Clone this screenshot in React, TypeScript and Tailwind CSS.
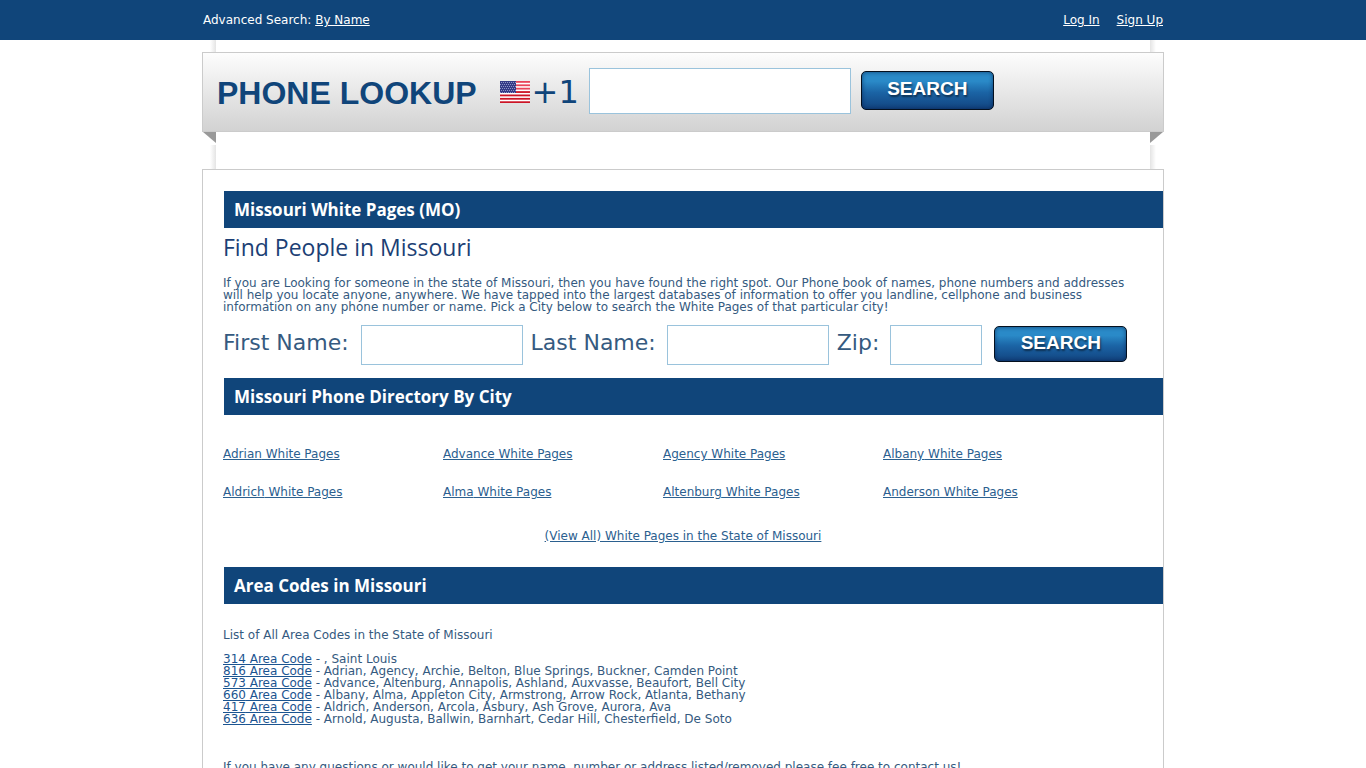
import React from 'react';

const cities = ['Adrian', 'Advance', 'Agency', 'Albany', 'Aldrich', 'Alma', 'Altenburg', 'Anderson'];

const areaCodes = [
  { code: '314', places: ', Saint Louis' },
  { code: '816', places: 'Adrian, Agency, Archie, Belton, Blue Springs, Buckner, Camden Point' },
  { code: '573', places: 'Advance, Altenburg, Annapolis, Ashland, Auxvasse, Beaufort, Bell City' },
  { code: '660', places: 'Albany, Alma, Appleton City, Armstrong, Arrow Rock, Atlanta, Bethany' },
  { code: '417', places: 'Aldrich, Anderson, Arcola, Asbury, Ash Grove, Aurora, Ava' },
  { code: '636', places: 'Arnold, Augusta, Ballwin, Barnhart, Cedar Hill, Chesterfield, De Soto' },
];

const stripes = [0, 1, 2, 3, 4, 5, 6];

const Flag = () => (
  <svg width="30" height="22" viewBox="0 0 30 22" aria-hidden="true">
    <rect width="30" height="22" fill="#fff" />
    {stripes.map((n) => (
      <rect key={n} y={n * 3.38} width="30" height="1.8" fill={n < 3 ? '#e8455a' : '#cc1426'} />
    ))}
    <rect width="16" height="12" fill="#343a86" />
    {[1, 3, 5, 7, 9, 11].map((y) =>
      [1, 3, 5, 7, 9, 11, 13, 15].map((x) => (
        <rect key={`${x}-${y}`} x={x - (y % 4 === 1 ? 0 : 1)} y={y} width="1" height="1" fill="#8d92c6" />
      ))
    )}
  </svg>
);

const SearchButton = ({ className }: { className: string }) => (
  <button
    type="submit"
    className={`mb-0.5 w-[133px] shrink-0 rounded-[5px] border border-[#04101f] bg-linear-to-b from-[#2a8ac8] from-25% via-[#1b64a5] via-55% to-[#124480] pb-0.5 font-['Liberation_Sans',Arial,sans-serif] text-[19px] font-bold text-white shadow-[inset_0_0_4px_rgba(0,20,60,0.6)] [text-shadow:1px_2px_2px_rgba(0,0,0,0.5)] ${className}`}
  >
    SEARCH
  </button>
);

// soft vertical edges that run behind the ribbon
const Edges = ({ className }: { className: string }) => (
  <div className={`flex justify-between px-2 ${className}`}>
    <div className="w-1.5 bg-linear-to-l from-[#e4e4e4] to-white" />
    <div className="w-1.5 bg-linear-to-r from-[#e4e4e4] to-white" />
  </div>
);

const Folds = () => (
  <div className="flex justify-between">
    <svg width="14" height="13" viewBox="0 0 14 13" aria-hidden="true">
      <path d="M1 0H14V11Z" fill="#999" />
    </svg>
    <svg width="14" height="13" viewBox="0 0 14 13" aria-hidden="true">
      <path d="M13 0H0V11Z" fill="#999" />
    </svg>
  </div>
);

const Bar = ({ children }: { children: React.ReactNode }) => (
  <h2 className="ml-[21px] flex h-[37px] items-center bg-[#10457a] px-2.5 font-['Open_Sans',sans-serif] text-[17px] font-bold text-white">
    {children}
  </h2>
);

const inputStyle = 'min-w-0 border border-[#9ac3dc] bg-white px-2 text-xl outline-none';

export default function App() {
  return (
    <div className="min-h-screen bg-white font-['DejaVu_Sans',Verdana,sans-serif] text-xs leading-3 text-[#355a80]">
      <nav className="bg-[#10457a] text-white">
        <div className="mx-auto flex h-10 max-w-[960px] items-center justify-between">
          <div>
            Advanced Search: <a href="#name" className="underline">By Name</a>
          </div>
          <div className="flex gap-[17px]">
            <a href="#login" className="underline">Log In</a>
            <a href="#signup" className="underline">Sign Up</a>
          </div>
        </div>
      </nav>

      <div className="mx-auto max-w-[962px]">
        <Edges className="h-3" />
        <header className="flex h-20 items-center border border-[#cbcbcb] bg-linear-to-b from-[#fdfdfd] to-[#d2d2d2] px-3.5 text-[#10457a]">
          <h1 className="pt-0.5 font-['Liberation_Sans',Arial,sans-serif] text-[32px] leading-8 font-bold whitespace-nowrap">PHONE LOOKUP</h1>
          <form className="ml-[23px] flex items-center pb-0.5" onSubmit={(e) => e.preventDefault()}>
            <label htmlFor="phone" className="flex items-center gap-0.5 pt-0.5 text-[32px] leading-8">
              <Flag />
              +1
            </label>
            <input id="phone" type="tel" className={`ml-2.5 h-[46px] w-[262px] ${inputStyle}`} />
            <SearchButton className="ml-2.5 h-[39px]" />
          </form>
        </header>
        <Folds />
        <Edges className="h-6" />

        <main className="border border-[#cbcbcb] pt-[21px] pb-10">
          <Bar>Missouri White Pages (MO)</Bar>
          <section className="px-5">
            <h3 className="mt-[3px] font-['Open_Sans',sans-serif] text-[23px] leading-8 text-[#1c3f75]">Find People in Missouri</h3>
            <p className="mt-3.5 max-w-[920px]">
              If you are Looking for someone in the state of Missouri, then you have found the right spot. Our Phone book of names, phone numbers and addresses will help you locate anyone, anywhere. We have tapped into the largest databases of information to offer you landline, cellphone and business information on any phone number or name. Pick a City below to search the White Pages of that particular city!
            </p>
            <form className="mt-3 mb-[13px] flex items-center text-[22px] leading-6 whitespace-nowrap" onSubmit={(e) => e.preventDefault()}>
              <label htmlFor="first" className="pb-1">First Name:</label>
              <input id="first" type="text" className={`ml-3 h-10 w-[162px] ${inputStyle}`} />
              <label htmlFor="last" className="ml-2 pb-1">Last Name:</label>
              <input id="last" type="text" className={`ml-[11px] h-10 w-[162px] ${inputStyle}`} />
              <label htmlFor="zip" className="ml-2 pb-1">Zip:</label>
              <input id="zip" type="text" className={`ml-[11px] h-10 w-[92px] ${inputStyle}`} />
              <SearchButton className="ml-3 h-9" />
            </form>
          </section>

          <Bar>Missouri Phone Directory By City</Bar>
          <section className="px-5 pt-[33px] pb-[25px] text-[#2b608f]">
            <ul className="grid max-w-[880px] grid-cols-4 gap-y-[26px]">
              {cities.map((city) => (
                <li key={city}>
                  <a href={`#${city}`} className="underline">{city} White Pages</a>
                </li>
              ))}
            </ul>
            <p className="mt-8 text-center">
              <a href="#all" className="underline">(View All) White Pages in the State of Missouri</a>
            </p>
          </section>

          <Bar>Area Codes in Missouri</Bar>
          <section className="px-5 pt-[25px]">
            <p>List of All Area Codes in the State of Missouri</p>
            <ul className="mt-3">
              {areaCodes.map(({ code, places }) => (
                <li key={code}>
                  <a href={`#${code}`} className="text-[#1b5490] underline">{code} Area Code</a> - {places}
                </li>
              ))}
            </ul>
            <p className="mt-9">
              If you have any questions or would like to get your name, number or address listed/removed please fee free to contact us!
            </p>
          </section>
        </main>
      </div>
    </div>
  );
}
